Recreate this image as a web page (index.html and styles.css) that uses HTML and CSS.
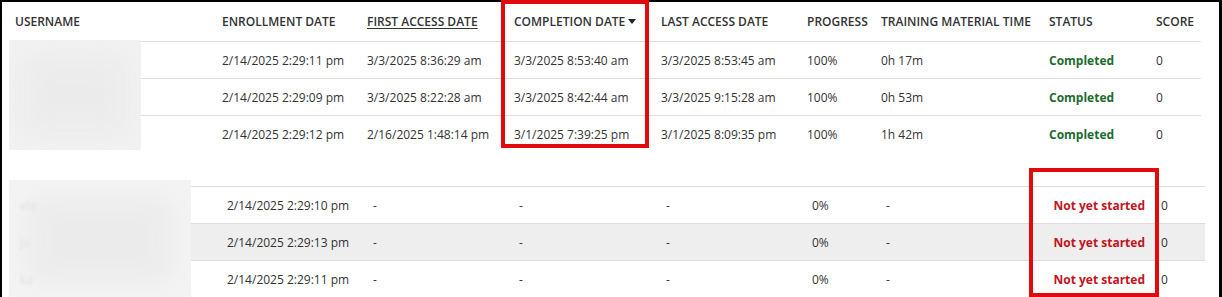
FILE: index.html
```html
<!DOCTYPE html>
<html lang="en">
<head>
<meta charset="utf-8">
<title>Learners</title>
<link rel="stylesheet" href="styles.css">
</head>
<body>
<div class="screen">
  <div class="frame">
    <div class="table t1">
      <div class="row head">
        <div class="cell">USERNAME</div>
        <div class="cell">ENROLLMENT DATE</div>
        <div class="cell"><span class="link">FIRST ACCESS DATE</span></div>
        <div class="cell">COMPLETION DATE<svg class="caret" width="8" height="5" viewBox="0 0 8 5"><path d="M0 0h8L4 5z" fill="#222"/></svg></div>
        <div class="cell">LAST ACCESS DATE</div>
        <div class="cell">PROGRESS</div>
        <div class="cell">TRAINING MATERIAL TIME</div>
        <div class="cell">STATUS</div>
        <div class="cell">SCORE</div>
      </div>
      <div class="row">
        <div class="cell"></div>
        <div class="cell">2/14/2025 2:29:11 pm</div>
        <div class="cell">3/3/2025 8:36:29 am</div>
        <div class="cell">3/3/2025 8:53:40 am</div>
        <div class="cell">3/3/2025 8:53:45 am</div>
        <div class="cell">100%</div>
        <div class="cell">0h 17m</div>
        <div class="cell done">Completed</div>
        <div class="cell">0</div>
      </div>
      <div class="row">
        <div class="cell"></div>
        <div class="cell">2/14/2025 2:29:09 pm</div>
        <div class="cell">3/3/2025 8:22:28 am</div>
        <div class="cell">3/3/2025 8:42:44 am</div>
        <div class="cell">3/3/2025 9:15:28 am</div>
        <div class="cell">100%</div>
        <div class="cell">0h 53m</div>
        <div class="cell done">Completed</div>
        <div class="cell">0</div>
      </div>
      <div class="row">
        <div class="cell"></div>
        <div class="cell">2/14/2025 2:29:12 pm</div>
        <div class="cell">2/16/2025 1:48:14 pm</div>
        <div class="cell">3/1/2025 7:39:25 pm</div>
        <div class="cell">3/1/2025 8:09:35 pm</div>
        <div class="cell">100%</div>
        <div class="cell">1h 42m</div>
        <div class="cell done">Completed</div>
        <div class="cell">0</div>
      </div>
      <div class="redact r1"><div class="blob"></div></div>
    </div>

    <div class="table t2">
      <div class="row">
        <div class="cell"></div>
        <div class="cell">2/14/2025 2:29:10 pm</div>
        <div class="cell">-</div>
        <div class="cell">-</div>
        <div class="cell">-</div>
        <div class="cell">0%</div>
        <div class="cell">-</div>
        <div class="cell todo">Not yet started</div>
        <div class="cell score">0</div>
      </div>
      <div class="row alt">
        <div class="cell"></div>
        <div class="cell">2/14/2025 2:29:13 pm</div>
        <div class="cell">-</div>
        <div class="cell">-</div>
        <div class="cell">-</div>
        <div class="cell">0%</div>
        <div class="cell">-</div>
        <div class="cell todo">Not yet started</div>
        <div class="cell score">0</div>
      </div>
      <div class="row">
        <div class="cell"></div>
        <div class="cell">2/14/2025 2:29:11 pm</div>
        <div class="cell">-</div>
        <div class="cell">-</div>
        <div class="cell">-</div>
        <div class="cell">0%</div>
        <div class="cell">-</div>
        <div class="cell todo">Not yet started</div>
        <div class="cell score">0</div>
      </div>
      <div class="redact r2">
        <div class="blob"></div>
        <div class="ghost g1">ele</div>
        <div class="ghost g2">ja</div>
        <div class="ghost g3">ka</div>
      </div>
    </div>
  </div>
  <div class="mark m1"></div>
  <div class="mark m2"></div>
</div>
</body>
</html>
```

FILE: styles.css
```css
* { box-sizing: border-box; }
html, body { margin: 0; padding: 0; background: #fff; }
body {
  font-family: "Open Sans", "Liberation Sans", sans-serif;
  font-size: 12px;
  color: #333;
}
.screen {
  position: relative;
  width: 1222px;
  height: 297px;
  overflow: hidden;
}
.frame {
  width: 1222px;
  height: 297px;
  border-top: 2px solid #000;
  border-left: 2px solid #000;
  border-right: 3px solid #000;
  overflow: hidden;
}
.table { position: relative; margin-left: 7px; }
.t1 { width: 1192px; }
.t2 { width: 1196px; margin-top: 34px; }
.row {
  display: grid;
  align-items: center;
  height: 37px;
  border-top: 1px solid #ddd;
  white-space: nowrap;
}
.t1 .row { grid-template-columns: 207px 145px 147px 147px 146px 74px 168px 107px 51px; }
.t2 .row { grid-template-columns: 212px 146px 146px 147px 146px 74px 163px 108px 54px; }
.row.head {
  height: 39px;
  border-top: none;
  font-weight: 600;
  color: #333;
}
.row.alt { background: #eee; }
.cell { padding-left: 6px; }
.link { text-decoration: underline; text-underline-offset: 2px; }
.caret { margin-left: 3px; vertical-align: 2px; }
.done { color: #1d6b2e; font-weight: 700; }
.todo { color: #c3131c; font-weight: 700; text-align: right; padding-left: 0; padding-right: 6px; }
.score { padding-left: 10px; }

.redact {
  position: absolute;
  left: 0;
  background: #f2f2f2;
  overflow: hidden;
}
.redact .blob {
  position: absolute;
  left: 10%;
  top: 15%;
  width: 80%;
  height: 70%;
  background: #ebebeb;
  filter: blur(14px);
}
.r1 { top: 38px; width: 132px; height: 110px; }
.r2 { top: -6px; width: 182px; height: 120px; background: #f4f4f4; }
.ghost {
  position: absolute;
  left: 11px;
  color: #e2e2e2;
  filter: blur(0.8px);
}
.g1 { top: 17px; }
.g2 { top: 54px; }
.g3 { top: 91px; }

.mark {
  position: absolute;
  border: 4px solid #e20a0a;
}
.m1 { left: 501px; top: 0; width: 148px; height: 148px; }
.m2 { left: 1029px; top: 168px; width: 130px; height: 129px; }
```
